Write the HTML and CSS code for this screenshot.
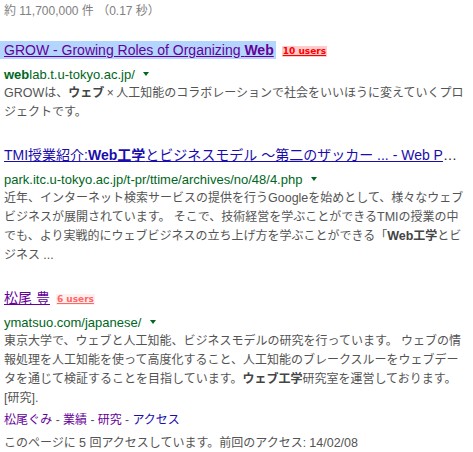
FILE: index.html
```html
<!DOCTYPE html>
<html lang="ja">
<head>
<meta charset="utf-8">
<title>検索結果</title>
<link rel="stylesheet" href="styles.css">
</head>
<body>
<div class="page">
  <div class="stats">約 11,700,000 件 （0.17 秒）</div>

  <div class="result first">
    <h3 class="title"><a class="visited sel" href="#">GROW - Growing Roles of Organizing <b>Web</b></a><span class="users hot">10 users</span></h3>
    <div class="url"><b>web</b>lab.t.u-tokyo.ac.jp/ <span class="caret"></span></div>
    <div class="snippet"><span class="lat">GROW</span>は、<b>ウェブ</b><span class="fw">×</span>人工知能のコラボレーションで社会をいいほうに変えていくプロジェクトです。</div>
  </div>

  <div class="result">
    <h3 class="title clip"><a href="#">TMI授業紹介:<b>Web工学</b>とビジネスモデル ～第二のザッカー ... - Web Platform | 東京大学</a></h3>
    <div class="url">park.itc.u-tokyo.ac.jp/t-pr/ttime/archives/no/48/4.php <span class="caret"></span></div>
    <div class="snippet">近年、インターネット検索サービスの提供を行う<span class="lat">Google</span>を始めとして、様々なウェブビジネスが展開されています。 そこで、技術経営を学ぶことができる<span class="lat">TMI</span>の授業の中でも、より実戦的にウェブビジネスの立ち上げ方を学ぶことができる「<b><span class="lat">Web</span>工学</b>とビジネス <span class="lat">...</span></div>
  </div>

  <div class="result">
    <h3 class="title"><a class="visited" href="#">松尾 豊</a><span class="users mild">6 users</span></h3>
    <div class="url">ymatsuo.com/japanese/ <span class="caret"></span></div>
    <div class="snippet">東京大学で、ウェブと人工知能、ビジネスモデルの研究を行っています。 ウェブの情報処理を人工知能を使って高度化すること、人工知能のブレークスルーをウェブデータを通じて検証することを目指しています。<b>ウェブ工学</b>研究室を運営しております。<span class="lat">[</span>研究<span class="lat">].</span></div>
    <div class="sitelinks"><a class="visited" href="#">松尾ぐみ</a> - <a class="visited" href="#">業績</a> - <a class="visited" href="#">研究</a> - <a href="#">アクセス</a></div>
    <div class="visits">このページに <span class="lat">5</span> 回アクセスしています。前回のアクセス: <span class="lat">14/02/08</span></div>
  </div>
</div>
</body>
</html>
```

FILE: styles.css
```css
html, body {
  margin: 0;
  padding: 0;
  background: #fff;
}
body {
  font-family: "Liberation Sans", Arial, "Noto Sans CJK JP", sans-serif;
  color: #222;
}
.page {
  padding-left: 4px;
  width: 462px;
}
.stats {
  font-size: 12px;
  line-height: 22px;
  color: #808080;
}
.result {
  margin-top: 23px;
}
.result.first {
  margin-top: 18px;
}
.title {
  margin: 0 0 6px 0;
  font-size: 14px;
  font-weight: normal;
  line-height: 20px;
  white-space: nowrap;
}
.title.clip {
  width: 455px;
  overflow: hidden;
  text-overflow: ellipsis;
}
.title a {
  color: #1a0dab;
  text-decoration: underline;
}
a.visited {
  color: #660099;
}
.title b {
  font-weight: bold;
}
.sel {
  background: #b4d5fe;
  margin-left: -4px;
  padding: 1px 2px 1px 4px;
}
.users {
  display: inline-block;
  margin-left: 6px;
  font-family: "DejaVu Sans", Verdana, sans-serif;
  font-size: 9px;
  font-weight: bold;
  line-height: 11px;
  padding: 0 1px;
  vertical-align: 1px;
  text-decoration: underline;
}
.users.hot {
  color: #ff0000;
  background: #ffcccc;
}
.users.mild {
  color: #ff6666;
  background: #fff0f0;
}
.url {
  font-size: 13px;
  line-height: 18px;
  color: #006621;
}
.url b {
  font-weight: bold;
}
.caret {
  display: inline-block;
  width: 0;
  height: 0;
  margin-left: 5px;
  border-left: 3px solid transparent;
  border-right: 3px solid transparent;
  border-top: 4px solid #006621;
  vertical-align: 3px;
}
.snippet {
  font-size: 12px;
  line-height: 19px;
  color: #545454;
}
.lat {
  font-size: 12.5px;
}
.fw {
  display: inline-block;
  width: 12px;
  text-align: center;
}
.snippet b {
  color: #444;
}
.sitelinks {
  margin-top: 3px;
  font-size: 12px;
  line-height: 19px;
  color: #545454;
}
.sitelinks a {
  color: #1a0dab;
  text-decoration: none;
}
.sitelinks a.visited {
  color: #660099;
}
.visits {
  margin-top: 4px;
  font-size: 12px;
  line-height: 19px;
  color: #545454;
}
```
